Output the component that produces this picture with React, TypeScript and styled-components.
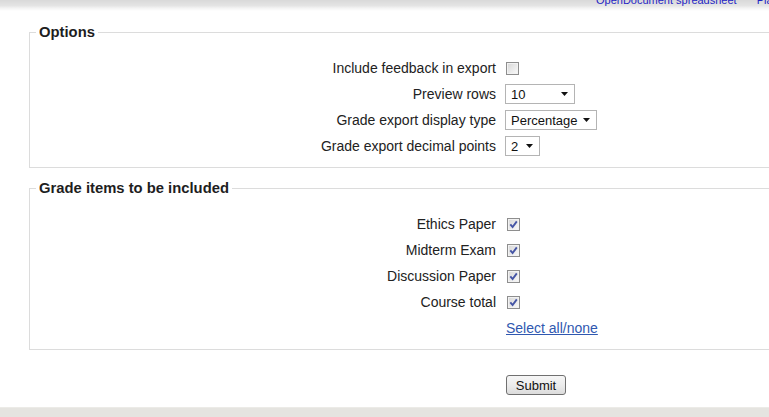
import { createGlobalStyle } from "styled-components";
import styled from "styled-components";

const GlobalStyle = createGlobalStyle`
    html, body {
        margin: 0;
        padding: 0;
        background: #fff;
        overflow: hidden;
    }
    body {
        font-family: "Liberation Sans", Arial, sans-serif;
        font-size: 14px;
        color: #222;
    }
`;

const TopBar = styled.div`
    height: 11px;
    overflow: hidden;
    background: linear-gradient(#d9d9d9 0%, #e4e4e4 50%, #f4f4f4 75%, #fff 100%);
    display: flex;
    align-items: flex-end;
    gap: 20px;
    padding-left: 596px;
    white-space: nowrap;
`;

const TopLink = styled.a`
    font-size: 11px;
    line-height: 11px;
    margin-bottom: 5px;
    color: #1f1fc4;
    text-decoration: none;
`;

const Main = styled.div`
    padding: 14px 0 0 29px;
`;

const Fieldset = styled.fieldset<{ $gap?: number }>`
    margin: ${(p) => p.$gap ?? 0}px -40px 0 0;
    padding: 0 0 8px 0;
    border: 1px solid #dcdcdc;
    min-width: 0;
`;

const Legend = styled.legend`
    margin-left: 6px;
    padding: 0 3px;
    font-weight: bold;
    font-size: 14.8px;
    line-height: 15px;
    color: #1e1e1e;
`;

const Rows = styled.div`
    padding-top: 15px;
`;

const Row = styled.div`
    display: grid;
    grid-template-columns: 466px auto;
    column-gap: 10px;
    align-items: center;
    height: 26px;
`;

const Label = styled.label`
    text-align: right;
    line-height: 16px;
`;

const Control = styled.div<{ $shift?: number }>`
    display: flex;
    align-items: center;
    margin-left: ${(p) => p.$shift ?? 0}px;
`;

const Box = styled.span`
    box-sizing: border-box;
    width: 13px;
    height: 13px;
    border: 1px solid #8e8e8e;
    background: linear-gradient(135deg, #d6d6d6 0%, #ececec 60%, #fafafa 100%);
    box-shadow: inset 0 0 0 1px #f2f2f2;
    display: inline-flex;
    align-items: center;
    justify-content: center;
`;

const SelectBox = styled.div<{ $width: number }>`
    box-sizing: border-box;
    width: ${(p) => p.$width}px;
    height: 20px;
    border: 1px solid #b4b4b4;
    background: #fff;
    display: flex;
    align-items: center;
    justify-content: space-between;
    padding: 0 6px 0 5px;
    margin-left: -1px;
    font-size: 13px;
    color: #111;
`;

const Link = styled.a`
    color: #3058b0;
    text-decoration: underline;
    line-height: 16px;
`;

const SubmitRow = styled(Row)`
    margin-top: 25px;
    height: 20px;
    padding-left: 1px;
`;

const Button = styled.button`
    box-sizing: border-box;
    width: 60px;
    height: 20px;
    padding: 0;
    font-family: "Liberation Sans", Arial, sans-serif;
    font-size: 13px;
    color: #111;
    border: 1px solid #707070;
    border-radius: 3px;
    background: linear-gradient(#f6f6f6 0%, #ececec 50%, #dcdcdc 100%);
`;

const Footer = styled.div`
    margin-top: 12px;
    height: 9px;
    background: #e5e4e0;
    border-top: 1px solid #ecebe7;
    border-bottom: 1px solid #a9a9a9;
`;

function Checkbox({ checked }: { checked?: boolean }) {
    return (
        <Box>
            {checked && (
                <svg width="9" height="9" viewBox="0 0 9 9">
                    <path d="M1.3 4.3 L3.6 7 L7.8 1.4" fill="none" stroke="#4555a5" strokeWidth="1.9" />
                </svg>
            )}
        </Box>
    );
}

function Select({ value, width }: { value: string; width: number }) {
    return (
        <SelectBox $width={width}>
            <span>{value}</span>
            <svg width="7" height="4" viewBox="0 0 7 4">
                <polygon points="0,0 7,0 3.5,4" fill="#111" />
            </svg>
        </SelectBox>
    );
}

const items = ["Ethics Paper", "Midterm Exam", "Discussion Paper", "Course total"];

export default function App() {
    return (
        <>
            <GlobalStyle />
            <TopBar>
                <TopLink href="#">OpenDocument spreadsheet</TopLink>
                <TopLink href="#">Plain text file</TopLink>
            </TopBar>
            <Main>
                <Fieldset>
                    <Legend>Options</Legend>
                    <Rows>
                        <Row>
                            <Label>Include feedback in export</Label>
                            <Control><Checkbox /></Control>
                        </Row>
                        <Row>
                            <Label>Preview rows</Label>
                            <Control><Select value="10" width={70} /></Control>
                        </Row>
                        <Row>
                            <Label>Grade export display type</Label>
                            <Control><Select value="Percentage" width={92} /></Control>
                        </Row>
                        <Row>
                            <Label>Grade export decimal points</Label>
                            <Control><Select value="2" width={35} /></Control>
                        </Row>
                    </Rows>
                </Fieldset>
                <Fieldset $gap={13}>
                    <Legend>Grade items to be included</Legend>
                    <Rows>
                        {items.map((name) => (
                            <Row key={name}>
                                <Label>{name}</Label>
                                <Control $shift={1}><Checkbox checked /></Control>
                            </Row>
                        ))}
                        <Row>
                            <span />
                            <Control><Link href="#">Select all/none</Link></Control>
                        </Row>
                    </Rows>
                </Fieldset>
                <SubmitRow>
                    <span />
                    <Control><Button>Submit</Button></Control>
                </SubmitRow>
            </Main>
            <Footer />
        </>
    );
}
